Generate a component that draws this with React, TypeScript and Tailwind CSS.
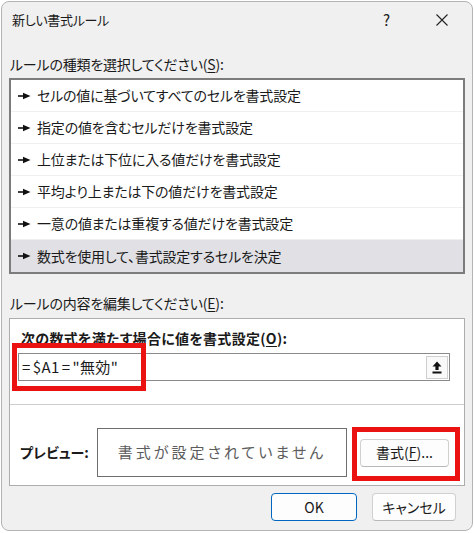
import React from "react";

const FONT = "[font-family:'Noto_Sans_CJK_JP','Noto_Sans',sans-serif]";

function Arrow() {
  return (
    <svg width="13" height="8" viewBox="0 0 13 8" className="shrink-0">
      <rect x="0" y="3.2" width="7" height="1.6" fill="#111" />
      <polygon points="5,0.8 12.5,4 5,7.2" fill="#111" />
    </svg>
  );
}

const items = [
  "セルの値に基づいてすべてのセルを書式設定",
  "指定の値を含むセルだけを書式設定",
  "上位または下位に入る値だけを書式設定",
  "平均より上または下の値だけを書式設定",
  "一意の値または重複する値だけを書式設定",
  "数式を使用して、書式設定するセルを決定",
];

export default function App() {
  return (
    <div className={`w-[474px] h-[533px] bg-white pt-[1px] pl-[1px] ${FONT} [font-feature-settings:'palt'] text-[#1a1a1a]`}>
      <div className="w-[472px] h-[530px] rounded-[8px] border border-[#b4b4b4] bg-[#f0f0f0] flex flex-col">
        {/* Title bar */}
        <div className="h-[36px] flex items-center pl-[10px] pr-[24px] text-[13px]">
          <span className="tracking-[-0.3px]">新しい書式ルール</span>
          <span className="ml-auto mr-[46px] text-[15px]">?</span>
          <svg width="12" height="12" viewBox="0 0 12 12">
            <path d="M0.5 0.5 L11.5 11.5 M11.5 0.5 L0.5 11.5" stroke="#222" strokeWidth="1.1" />
          </svg>
        </div>

        {/* Label 1 */}
        <div className="h-[40px] flex items-end pb-[4px] pl-[8px] text-[14px] leading-[20px]">
          <span className="tracking-[-0.2px]">
            ルールの種類を選択してください(<span className="underline underline-offset-2">S</span>):
          </span>
        </div>

        {/* List */}
        <div className="ml-[7px] w-[456px] h-[196px] border-2 border-[#7c7c7c] bg-white flex flex-col">
          {items.map((t, i) => (
            <div
              key={i}
              className={
                i === items.length - 1
                  ? "h-[32px] flex items-center gap-[6px] pl-[7px] text-[14px] bg-[#e0e0e5]"
                  : "h-[32px] flex items-center gap-[6px] pl-[7px] text-[14px] border-b border-[#f0f0f0]"
              }
            >
              <Arrow />
              <span className="tracking-[-0.2px]">{t}</span>
            </div>
          ))}
        </div>

        {/* Label 2 */}
        <div className="h-[44px] flex items-end pb-[5px] pl-[8px] text-[14px] leading-[20px]">
          <span className="tracking-[-0.2px]">
            ルールの内容を編集してください(<span className="underline underline-offset-2">E</span>):
          </span>
        </div>

        {/* Panel */}
        <div className="relative ml-[7px] w-[456px] h-[168px] border border-[#adadad] bg-white flex flex-col">
          <div className="h-[85px] flex flex-col">
            <div className="mt-[9px] pl-[11px] text-[14px] leading-[20px] font-bold tracking-[0.3px]">
              次の数式を満たす場合に値を書式設定(<span className="underline underline-offset-2">O</span>):
            </div>
            <div className="mt-[5px] ml-[8px] w-[432px] h-[28px] border border-[#8a8a8a] flex items-center pl-[3px] pr-[1px]">
              <span className="text-[15px] tracking-[0.4px]">
                <span className="mr-[2px]">=</span>$A1<span className="mx-[2px]">=</span>"無効"
              </span>
              <div className="ml-auto w-[22px] h-[23px] border border-[#cfcfcf] bg-[#f9f9f9] flex items-center justify-center">
                <svg width="10" height="13" viewBox="0 0 10 13">
                  <polygon points="5,0.5 9.5,5.5 6.6,5.5 6.6,9 3.4,9 3.4,5.5 0.5,5.5" fill="#111" />
                  <rect x="0.5" y="10.5" width="9" height="2" fill="#111" />
                </svg>
              </div>
            </div>
          </div>
          <div className="border-t border-[#cdcdcd] flex-1 pt-[23px] pl-[10px] flex items-start">
            <div className="h-[49px] flex items-center">
              <span className="w-[77px] text-[14px] font-bold">プレビュー:</span>
              <div className="w-[250px] h-[49px] border border-[#6e6e6e] flex items-center justify-center text-[15px] tracking-[3px] text-[#5c5c5c]">
                書式が設定されていません
              </div>
              <button className="ml-[13px] w-[89px] h-[28px] rounded-[4px] border border-[#d0d0d0] border-b-[#b8b8b8] bg-[#fdfdfd] text-[14px] flex items-center justify-center">
                書式(<span className="underline underline-offset-2">F</span>)...
              </button>
            </div>
          </div>

          {/* Red annotation boxes */}
          <div className="absolute left-[2px] top-[24px] w-[134px] h-[48px] border-[5px] border-[#eb1212] pointer-events-none" />
          <div className="absolute left-[342px] top-[108px] w-[108px] h-[54px] border-[5px] border-[#eb1212] pointer-events-none" />
        </div>

        {/* Buttons */}
        <div className="flex justify-end gap-[15px] pr-[16px] pt-[7px]">
          <button className="w-[86px] h-[28px] rounded-[4px] border border-[#0067c0] bg-[#fdfdfd] text-[14px] flex items-center justify-center">
            OK
          </button>
          <button className="w-[84px] h-[28px] rounded-[4px] border border-[#d0d0d0] border-b-[#b8b8b8] bg-[#fdfdfd] text-[14px] flex items-center justify-center">
            キャンセル
          </button>
        </div>
      </div>
    </div>
  );
}
